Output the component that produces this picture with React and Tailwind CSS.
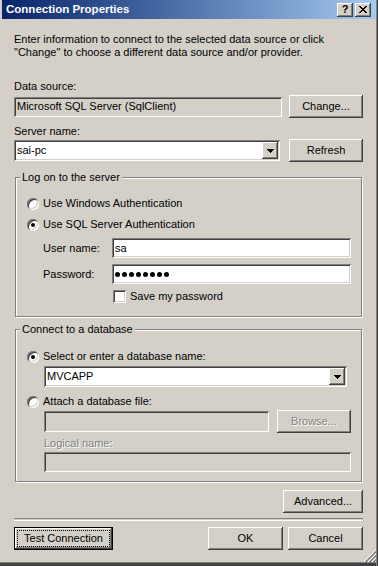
import React from "react";

const RAISED =
  "shadow-[inset_-1px_-1px_0_#404040,inset_1px_1px_0_#fff,inset_-2px_-2px_0_#808080,inset_2px_2px_0_#d4d0c8]";
const SUNKEN =
  "shadow-[inset_1px_1px_0_#808080,inset_-1px_-1px_0_#fff,inset_2px_2px_0_#404040,inset_-2px_-2px_0_#d4d0c8]";
const DISABLED_TEXT = "text-[#808080] [text-shadow:1px_1px_0_#fff]";

function Btn({ children, className = "", disabled = false }) {
  return (
    <div
      className={
        "flex h-[23px] shrink-0 items-center justify-center bg-[#d4d0c8] " +
        RAISED +
        " " +
        className
      }
    >
      <span className={disabled ? DISABLED_TEXT : ""}>{children}</span>
    </div>
  );
}

function TextBox({ children, className = "", gray = false }) {
  return (
    <div
      className={
        "flex items-center pl-[3px] " +
        (gray ? "bg-[#d4d0c8] " : "bg-white ") +
        SUNKEN +
        " " +
        className
      }
    >
      {children}
    </div>
  );
}

function Arrow() {
  return (
    <div
      className={
        "flex h-[17px] w-[16px] shrink-0 items-center justify-center bg-[#d4d0c8] " +
        RAISED
      }
    >
      <svg width="7" height="4" viewBox="0 0 7 4">
        <path d="M0 0h7v1h-1v1h-1v1h-1v1h-1v-1h-1v-1h-1v-1h-1z" fill="#000" />
      </svg>
    </div>
  );
}

function Combo({ value, className = "" }) {
  return (
    <div
      className={
        "flex h-[21px] items-center bg-white p-[2px] " + SUNKEN + " " + className
      }
    >
      <div className="flex-1 pl-[1px]">{value}</div>
      <Arrow />
    </div>
  );
}

function Radio({ checked }) {
  return (
    <div className="flex h-[12px] w-[12px] shrink-0 items-center justify-center rounded-full bg-white shadow-[inset_1px_1px_0_#808080,inset_-1px_-1px_0_#fff,inset_2px_2px_0_#404040,inset_-2px_-2px_0_#d4d0c8]">
      {checked && <div className="h-[4px] w-[4px] rounded-full bg-black" />}
    </div>
  );
}

function Group({ title, children, className = "" }) {
  return (
    <div
      className={
        "relative mx-[1px] flex flex-col border border-[#808080] pl-[11px] pr-[10px] shadow-[inset_1px_1px_0_#fff,1px_1px_0_#fff] " +
        className
      }
    >
      <span className="absolute left-[4px] top-[-7px] bg-[#d4d0c8] px-[2px] leading-[13px]">
        {title}
      </span>
      {children}
    </div>
  );
}

export default function App() {
  return (
    <div className="relative flex h-[566px] w-[378px] flex-col overflow-hidden bg-[#d4d0c8] font-['Liberation_Sans',Arial,sans-serif] text-[11px] leading-[13px] text-black shadow-[inset_-1px_0_0_#404040,inset_-2px_0_0_#808080,inset_0_-3px_0_#404040,inset_0_-4px_0_#808080]">
      {/* Title bar */}
      <div className="mx-[2px] flex h-[19px] shrink-0 items-center bg-linear-to-r from-[#0a246a] to-[#a6caf0] pl-[4px] pr-[5px]">
        <span className="text-[11.5px] font-bold text-white">Connection Properties</span>
        <div className="ml-auto flex gap-[2px]">
          <div
            className={
              "flex h-[14px] w-[16px] items-center justify-center bg-[#d4d0c8] " +
              RAISED
            }
          >
            <span className="text-[11px] font-bold leading-none">?</span>
          </div>
          <div
            className={
              "flex h-[14px] w-[16px] items-center justify-center bg-[#d4d0c8] " +
              RAISED
            }
          >
            <svg width="8" height="7" viewBox="0 0 8 7">
              <path
                d="M0 0h2v1h1v1h2v-1h1v-1h2v1h-1v1h-1v1h-1v1h1v1h1v1h1v1h-2v-1h-1v-1h-2v1h-1v1h-2v-1h1v-1h1v-1h1v-1h-1v-1h-1v-1h-1z"
                fill="#000"
              />
            </svg>
          </div>
        </div>
      </div>

      {/* Body */}
      <div className="flex flex-col pl-[14px] pr-[15px]">
        <p className="mt-[14px]">
          Enter information to connect to the selected data source or click
          <br />
          "Change" to choose a different data source and/or provider.
        </p>

        <div className="mt-[21px]">Data source:</div>
        <div className="mt-[2px] flex h-[23px] items-center justify-between">
          <TextBox gray className="h-[20px] w-[268px]">
            Microsoft SQL Server (SqlClient)
          </TextBox>
          <Btn className="w-[74px]">Change...</Btn>
        </div>

        <div className="mt-[7px]">Server name:</div>
        <div className="mt-[1px] flex h-[23px] items-center justify-between">
          <Combo value="sai-pc" className="w-[266px]" />
          <Btn className="w-[74px]">Refresh</Btn>
        </div>

        {/* Log on group */}
        <Group title="Log on to the server" className="mt-[15px] pb-[13px] pt-[19px]">
          <div className="flex h-[13px] items-center gap-[4px]">
            <Radio />
            <span>Use Windows Authentication</span>
          </div>
          <div className="mt-[8px] flex h-[13px] items-center gap-[4px]">
            <Radio checked />
            <span>Use SQL Server Authentication</span>
          </div>
          <div className="mt-[7px] flex items-center pl-[16px]">
            <span className="w-[69px] shrink-0">User name:</span>
            <TextBox className="h-[20px] flex-1">sa</TextBox>
          </div>
          <div className="mt-[6px] flex items-center pl-[16px]">
            <span className="w-[69px] shrink-0">Password:</span>
            <TextBox className="h-[20px] flex-1 gap-[2px]">
              {[0, 1, 2, 3, 4, 5, 6, 7].map((i) => (
                <span key={i} className="h-[5px] w-[5px] rounded-full bg-black" />
              ))}
            </TextBox>
          </div>
          <div className="mt-[6px] flex h-[13px] items-center gap-[4px] pl-[86px]">
            <div className={"h-[13px] w-[13px] shrink-0 bg-white " + SUNKEN} />
            <span>Save my password</span>
          </div>
        </Group>

        {/* Connect group */}
        <Group title="Connect to a database" className="mt-[12px] pb-[9px] pt-[20px]">
          <div className="flex h-[13px] items-center gap-[4px]">
            <Radio checked />
            <span>Select or enter a database name:</span>
          </div>
          <Combo value="MVCAPP" className="ml-[17px] mr-[4px] mt-[3px]" />
          <div className="mt-[8px] flex h-[13px] items-center gap-[4px]">
            <Radio />
            <span>Attach a database file:</span>
          </div>
          <div className="ml-[17px] mt-[2px] flex h-[23px] items-center gap-[8px]">
            <TextBox gray className="h-[21px] flex-1" />
            <Btn disabled className="w-[74px]">
              Browse...
            </Btn>
          </div>
          <div className={"ml-[17px] mt-[4px] " + DISABLED_TEXT}>Logical name:</div>
          <TextBox gray className="ml-[17px] mt-[2px] h-[20px]" />
        </Group>

        <Btn className="mt-[8px] w-[80px] self-end">Advanced...</Btn>

        <div className="mt-[5px] h-[2px] border-t border-[#808080] shadow-[0_1px_0_#fff]" />

        <div className="mt-[7px] flex items-center">
          <div
            className={
              "flex h-[23px] w-[99px] border border-black bg-[#d4d0c8] p-[2px] " +
              RAISED
            }
          >
            <div className="flex flex-1 items-center justify-center border border-dotted border-black">
              Test Connection
            </div>
          </div>
          <div className="flex-1" />
          <Btn className="w-[75px]">OK</Btn>
          <Btn className="ml-[5px] w-[75px]">Cancel</Btn>
        </div>
      </div>

      {/* Resize grip */}
      <svg
        className="absolute bottom-[4px] right-[2px]"
        width="12"
        height="12"
        viewBox="0 0 12 12"
      >
        <path d="M12 0L0 12M12 4L4 12M12 8L8 12" stroke="#fff" strokeWidth="1" />
        <path d="M12 1L1 12M12 2L2 12M12 5L5 12M12 6L6 12M12 9L9 12M12 10L10 12" stroke="#808080" strokeWidth="1" />
      </svg>
    </div>
  );
}
